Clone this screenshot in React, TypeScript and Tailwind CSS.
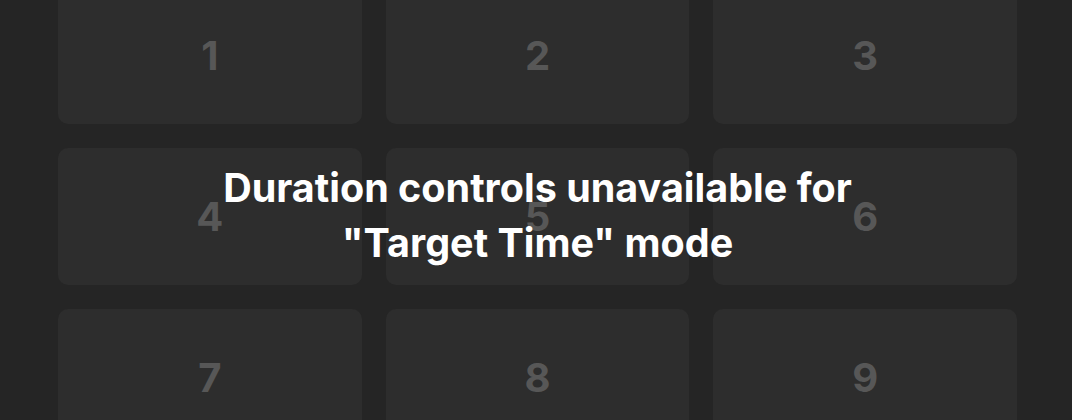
import React from "react";

export default function App() {
  const nums = [1, 2, 3, 4, 5, 6, 7, 8, 9];
  return (
    <div
      className="relative w-[1072px] h-[420px] overflow-hidden bg-[#252525]"
      style={{ fontFamily: "Inter, 'Noto Sans', sans-serif" }}
    >
      <div className="grid grid-cols-3 gap-x-[24px] gap-y-[24px] pl-[58px] pr-[55px] mt-[-13px]">
        {nums.map((n) => (
          <div
            key={n}
            className="h-[137px] rounded-[10px] bg-[#2d2d2d] flex items-center justify-center"
          >
            <span className="text-[40px] leading-none font-bold text-[#575757]">{n}</span>
          </div>
        ))}
      </div>
      <div className="absolute inset-0 flex items-center justify-center pl-[3px]">
        <p className="text-white text-[39.5px] leading-[55px] font-bold text-center mt-[12px] w-[760px]">
          Duration controls unavailable for
          <br />
          "Target Time" mode
        </p>
      </div>
    </div>
  );
}
